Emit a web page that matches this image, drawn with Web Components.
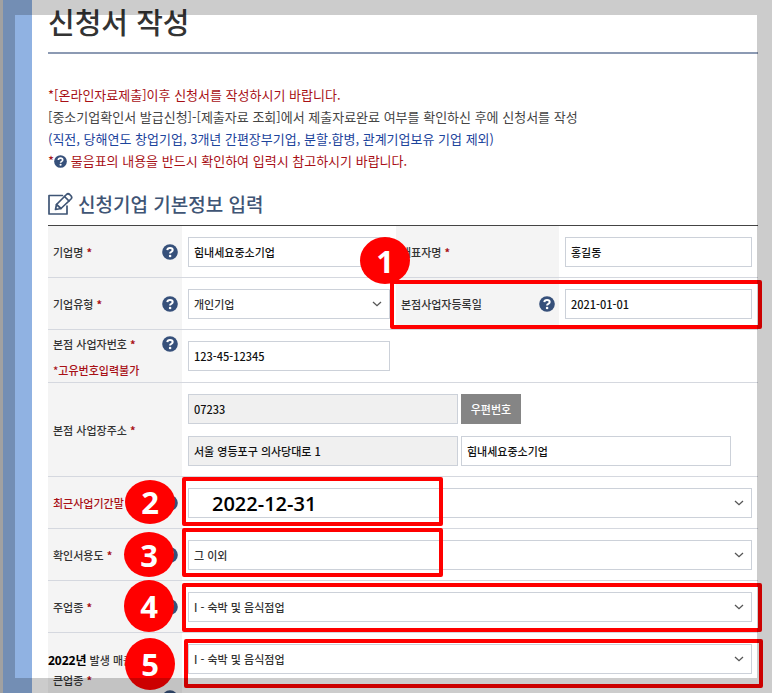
<!DOCTYPE html>
<html lang="ko">
<head>
<meta charset="utf-8">
<meta name="viewport" content="width=device-width, initial-scale=1">
<title>신청서 작성</title>
<style>
    html, body { height: 100%; }
    body {
        margin: 0;
        background: #fff;
        color: #333;
        font-family: "Noto Sans CJK KR", "Noto Sans", sans-serif;
        font-size: 11px;
    }
</style>
</head>
<body>
<page-shell>
    <page-title>신청서 작성</page-title>

    <notice-list>
        <notice-line tone="red">*[온라인자료제출]이후 신청서를 작성하시기 바랍니다.</notice-line>
        <notice-line>[중소기업확인서 발급신청]-[제출자료 조회]에서 제출자료완료 여부를 확인하신 후에 신청서를 작성</notice-line>
        <notice-line tone="blue">(직전, 당해연도 창업기업, 3개년 간편장부기업, 분할.합병, 관계기업보유 기업 제외)</notice-line>
        <notice-line tone="red">*<help-icon small></help-icon> 물음표의 내용을 반드시 확인하여 입력시 참고하시기 바랍니다.</notice-line>
    </notice-list>

    <section-title>신청기업 기본정보 입력</section-title>

    <form-table>
        <form-row split>
            <form-field label="기업명" required help value="힘내세요중소기업"></form-field>
            <form-field label="대표자명" required value="홍길동" wide></form-field>
        </form-row>
        <form-row split>
            <form-field label="기업유형" required help type="select" value="개인기업"></form-field>
            <form-field label="본점사업자등록일" help value="2021-01-01" wide></form-field>
        </form-row>
        <form-row split>
            <form-field label="본점 사업자번호" required help note="*고유번호입력불가" value="123-45-12345"></form-field>
        </form-row>
        <form-row>
            <address-field></address-field>
        </form-row>
        <form-row>
            <form-field label="최근사업기간말" accent help type="select" value="2022-12-31" large></form-field>
        </form-row>
        <form-row>
            <form-field label="확인서용도" required help type="select" value="그 이외"></form-field>
        </form-row>
        <form-row>
            <form-field label="주업종" required help type="select" value="I - 숙박 및 음식점업"></form-field>
        </form-row>
        <form-row>
            <form-field label="발생 매출" year="2022년" more="큰업종" required help type="select" value="I - 숙박 및 음식점업"></form-field>
        </form-row>
    </form-table>

    <step-box slot="guide" style="top: 280px; left: 390px; right: 10px"></step-box>
    <step-box slot="guide" style="top: 477px; left: 182px; width: 261px"></step-box>
    <step-box slot="guide" style="top: 528px; left: 182px; width: 261px"></step-box>
    <step-box slot="guide" style="top: 583px; left: 182px; right: 10px"></step-box>
    <step-box slot="guide" style="top: 639px; left: 184px; right: 9px"></step-box>
    <step-badge slot="guide" style="top: 237px; left: 360px; height: 47px">1</step-badge>
    <step-badge slot="guide" style="top: 480px; left: 125px; height: 44px">2</step-badge>
    <step-badge slot="guide" style="top: 532px; left: 124px; height: 45px">3</step-badge>
    <step-badge slot="guide" style="top: 580px; left: 124px; height: 52px">4</step-badge>
    <step-badge slot="guide" style="top: 638px; left: 125px; height: 52px">5</step-badge>
</page-shell>

<script>
// attach an open shadow root and fill it
function render(el, html) {
    const template = document.createElement('template');
    template.innerHTML = html;
    el.attachShadow({ mode: 'open' });
    el.shadowRoot.appendChild(template.content.cloneNode(true));
}

// styles shared by every form control
const controlStyle = `
    * { box-sizing: border-box; }
    input, select, button {
        width: 100%;
        height: 30px;
        margin: 0;
        border: 1px solid #ccd1d9;
        border-radius: 0;
        background: #fff;
        color: #111;
        font: 500 11px "Noto Sans CJK KR", "Noto Sans", sans-serif;
        padding: 0 5px;
    }
    input[readonly] { background: #f0f0f0; }
    .name {
        display: flex;
        justify-content: space-between;
        align-items: center;
        padding: 0 4px 0 5px;
        background: #f4f4f4;
        font-weight: 500;
        line-height: 20px;
        color: #333;
    }
    .star { color: #a81016; font-weight: 700; }
`;

class PageShell extends HTMLElement {
    constructor() {
        super();
        render(this, `
            <style>
                :host { display: block; height: 100vh; overflow: hidden; position: relative; }
                main {
                    border-left: 3px solid #cacaca;
                    box-shadow: inset 29px 0 #90b2e2;
                    padding: 0 14px 0 45px;
                    min-height: 100%;
                    box-sizing: border-box;
                }
                /* dimmed rim over the whole page */
                .rim {
                    position: absolute;
                    inset: 0;
                    border: 15px solid rgba(0, 0, 0, .2);
                    pointer-events: none;
                }
            </style>
            <main><slot></slot></main>
            <slot name="guide"></slot>
            <div class="rim"></div>
        `);
    }
}

class PageTitle extends HTMLElement {
    constructor() {
        super();
        render(this, `
            <style>
                :host { display: block; }
                h1 {
                    margin: 0;
                    height: 52px;
                    border-bottom: 2px solid #8c9ab3;
                    font-size: 29px;
                    font-weight: 500;
                    line-height: 42px;
                    color: #333;
                }
            </style>
            <h1><slot></slot></h1>
        `);
    }
}

class NoticeList extends HTMLElement {
    constructor() {
        super();
        render(this, `
            <style>
                :host { display: block; padding: 30px 0 18px; }
            </style>
            <slot></slot>
        `);
    }
}

class NoticeLine extends HTMLElement {
    constructor() {
        super();
        render(this, `
            <style>
                :host { display: block; font-size: 13px; line-height: 22px; white-space: nowrap; color: #444; }
                :host([tone="red"]) { color: #a81016; }
                :host([tone="blue"]) { color: #1c449c; }
            </style>
            <slot></slot>
        `);
    }
}

class SectionTitle extends HTMLElement {
    constructor() {
        super();
        render(this, `
            <style>
                :host { display: block; }
                h2 {
                    display: flex;
                    align-items: center;
                    gap: 5px;
                    margin: 0 0 7px;
                    font-size: 19px;
                    font-weight: 500;
                    line-height: 28px;
                    color: #3f5575;
                }
                h2 svg { width: 25px; height: 24px; }
            </style>
            <h2>
                <svg viewBox="0 0 25 24" fill="none" stroke="#3f5575" stroke-width="1.7" stroke-linejoin="round" stroke-linecap="round" aria-hidden="true">
                    <path d="M14.500 3.500H1V22H19V14"/>
                    <path d="M7.500 17.500L8.500 12.500L18.500 2.500Q20 1 21.700 2.500L23 3.800Q24.500 5.500 23 7L13 16.500Z"/>
                    <path d="M16.500 4.500L21 9M8.500 12.500L13 16.500"/>
                </svg>
                <slot></slot>
            </h2>
        `);
    }
}

class HelpIcon extends HTMLElement {
    constructor() {
        super();
        render(this, `
            <style>
                :host { display: inline-block; width: 16px; height: 16px; flex: none; }
                :host([small]) { width: 13px; height: 13px; vertical-align: -2px; }
                svg { display: block; width: 100%; height: 100%; }
            </style>
            <svg viewBox="0 0 16 16" aria-hidden="true">
                <circle cx="8" cy="8" r="7.800" fill="#36507a"/>
                <path d="M5.300 6.100Q5.500 3.900 8 3.900Q10.700 3.900 10.700 6Q10.700 7.100 9.300 7.900Q8.100 8.500 8.100 9.600" fill="none" stroke="#fff" stroke-width="2"/>
                <circle cx="8.100" cy="12" r="1.300" fill="#fff"/>
            </svg>
        `);
    }
}

class FormTable extends HTMLElement {
    constructor() {
        super();
        render(this, `
            <style>
                :host { display: block; border-top: 1px solid #444; }
            </style>
            <slot></slot>
        `);
    }
}

class FormRow extends HTMLElement {
    constructor() {
        super();
        render(this, `
            <style>
                :host { display: grid; grid-template-columns: minmax(0, 1fr); border-bottom: 1px solid #d5d8df; }
                :host([split]) { grid-template-columns: minmax(0, 49fr) minmax(0, 51fr); }
            </style>
            <slot></slot>
        `);
    }
}

class FormField extends HTMLElement {
    constructor() {
        super();
        const get = (name) => this.getAttribute(name);
        const star = this.hasAttribute('required') ? ' <span class="star">*</span>' : '';
        const help = this.hasAttribute('help') ? '<help-icon></help-icon>' : '';
        const year = get('year') ? `<b>${get('year')}</b> ` : '';

        let text = `<span class="text">${year}${get('label')}${star}</span>`;
        if (get('more')) {
            text = `<span class="text">${year}${get('label')}<br><span class="more">${get('more')}${star}</span></span>`;
        }
        if (get('note')) {
            text = `<span class="text"><span class="first">${get('label')}${star}</span><span class="note">${get('note')}</span></span>`;
        }

        const control = get('type') === 'select'
            ? `<select id="control"><option>${get('value')}</option></select>
               <svg viewBox="0 0 10 6" aria-hidden="true"><path d="M1 1L5 4.700L9 1" fill="none" stroke="#555" stroke-width="1.300"/></svg>`
            : `<input id="control" type="text" value="${get('value')}">`;

        render(this, `
            <style>
                ${controlStyle}
                :host { display: grid; grid-template-columns: 134px minmax(0, 1fr); }
                :host([wide]) { grid-template-columns: 163px minmax(0, 1fr); }
                :host([accent]) .name { color: #a81016; }
                .value { padding: 11px 6px 10px; display: grid; align-items: start; }
                .value > * { grid-area: 1 / 1; }
                select { appearance: none; color: #333; }
                .value svg { width: 10px; height: 6px; justify-self: end; align-self: start; margin: 12px 8px; pointer-events: none; }
                :host([large]) select {
                    padding-left: 23px;
                    font: 600 20px "Open Sans", "Noto Sans", sans-serif;
                    color: #000;
                }
                :host([note]) .name { align-items: flex-start; }
                .first { display: block; line-height: 28px; }
                .note { display: block; line-height: 24px; color: #a81016; }
                :host([note]) help-icon { margin-top: 6px; }
                /* last row: two label lines with the icon below them */
                :host([more]) .name { flex-direction: column; align-items: flex-start; padding: 17px 4px 8px 0; white-space: nowrap; }
                :host([more]) help-icon { align-self: flex-end; }
                .more { padding-left: 5px; }
                b { font: 700 12px "Noto Sans", "Noto Sans CJK KR", sans-serif; color: #000; }
            </style>
            <label class="name" for="control">${text}${help}</label>
            <div class="value">${control}</div>
        `);
    }
}

class AddressField extends HTMLElement {
    constructor() {
        super();
        render(this, `
            <style>
                ${controlStyle}
                :host { display: grid; grid-template-columns: 134px minmax(0, 1fr); }
                .value {
                    display: grid;
                    grid-template-columns: 1fr 1fr;
                    gap: 12px 3px;
                    padding: 11px 27px 10px 6px;
                }
                button { width: 60px; border-color: #858585; background: #858585; color: #fff; }
            </style>
            <label class="name" for="zip"><span>본점 사업장주소 <span class="star">*</span></span></label>
            <div class="value">
                <input id="zip" type="text" value="07233" readonly>
                <button type="button">우편번호</button>
                <input type="text" value="서울 영등포구 의사당대로 1" aria-label="주소" readonly>
                <input type="text" value="힘내세요중소기업" aria-label="상세주소">
            </div>
        `);
    }
}

// red outline drawn over the field being explained
class StepBox extends HTMLElement {
    constructor() {
        super();
        render(this, `
            <style>
                :host {
                    position: absolute;
                    height: 49px;
                    box-sizing: border-box;
                    border: 4px solid #f00;
                    border-radius: 2px;
                    pointer-events: none;
                }
            </style>
        `);
    }
}

class StepBadge extends HTMLElement {
    constructor() {
        super();
        render(this, `
            <style>
                :host {
                    position: absolute;
                    display: flex;
                    align-items: center;
                    justify-content: center;
                    width: 50px;
                    border-radius: 50%;
                    background: #f00;
                    color: #fff;
                    font: 700 31px/40px "Open Sans", "Noto Sans", sans-serif;
                }
            </style>
            <slot></slot>
        `);
    }
}

customElements.define('help-icon', HelpIcon);
customElements.define('page-shell', PageShell);
customElements.define('page-title', PageTitle);
customElements.define('notice-list', NoticeList);
customElements.define('notice-line', NoticeLine);
customElements.define('section-title', SectionTitle);
customElements.define('form-table', FormTable);
customElements.define('form-row', FormRow);
customElements.define('form-field', FormField);
customElements.define('address-field', AddressField);
customElements.define('step-box', StepBox);
customElements.define('step-badge', StepBadge);
</script>
</body>
</html>
